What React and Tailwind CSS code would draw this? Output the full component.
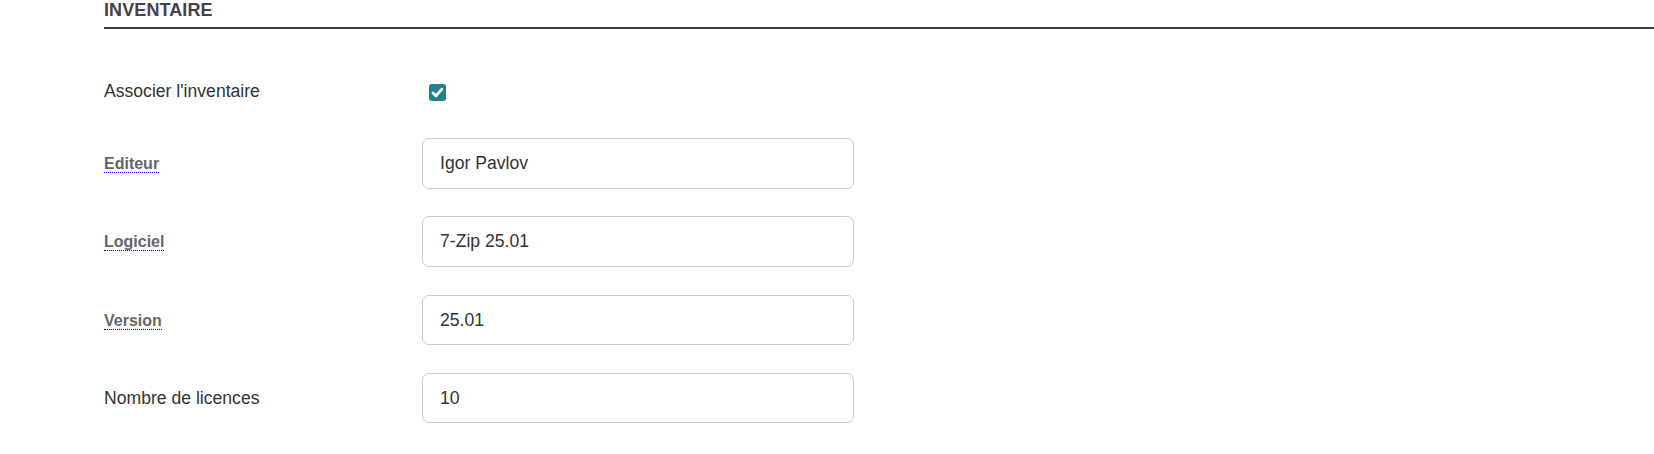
import React from "react";

function Label({ children, abbr }) {
  if (abbr) {
    return (
      <span className="font-bold text-[16px] text-[#666666] border-b border-dotted border-[#0000ee] leading-[20px]">
        {children}
      </span>
    );
  }
  return <span className="text-[#333333]">{children}</span>;
}

function Row({ label, abbr, value }) {
  return (
    <div className="flex items-center h-[50.5px]">
      <div className="w-[318px] shrink-0">
        <Label abbr={abbr}>{label}</Label>
      </div>
      <div className="w-[432px] h-[50.5px] border border-[#cccccc] rounded-[7px] bg-white flex items-center px-[17px] text-[#333333]">
        {value}
      </div>
    </div>
  );
}

export default function App() {
  return (
    <div
      className="w-[1654px] h-[454px] bg-white pl-[104px] text-[17.6px] overflow-hidden"
      style={{ fontFamily: '"Liberation Sans", Arial, sans-serif' }}
    >
      <div className="h-[29px] border-b-2 border-[#3e3c4a]">
        <div className="font-bold text-[18px] text-[#45424f] leading-[20px] tracking-[0.1px]">INVENTAIRE</div>
      </div>
      <div className="mt-[37px] flex items-center h-[50px]">
        <div className="w-[318px] shrink-0">
          <Label>Associer l'inventaire</Label>
        </div>
        <div className="ml-[7px] mt-[2px] w-[17px] h-[17px] rounded-[3px] bg-[#22808f] flex items-center justify-center">
          <svg width="15" height="15" viewBox="0 0 16 16" fill="none">
            <path d="M3.2 8.6 L6.4 11.6 L12.6 4.4" stroke="white" strokeWidth="3" strokeLinecap="round" strokeLinejoin="round" />
          </svg>
        </div>
      </div>
      <div className="mt-[22px] flex flex-col gap-[27.8px]">
        <Row label="Editeur" abbr value="Igor Pavlov" />
        <Row label="Logiciel" abbr value="7-Zip 25.01" />
        <Row label="Version" abbr value="25.01" />
        <Row label="Nombre de licences" value="10" />
      </div>
    </div>
  );
}
